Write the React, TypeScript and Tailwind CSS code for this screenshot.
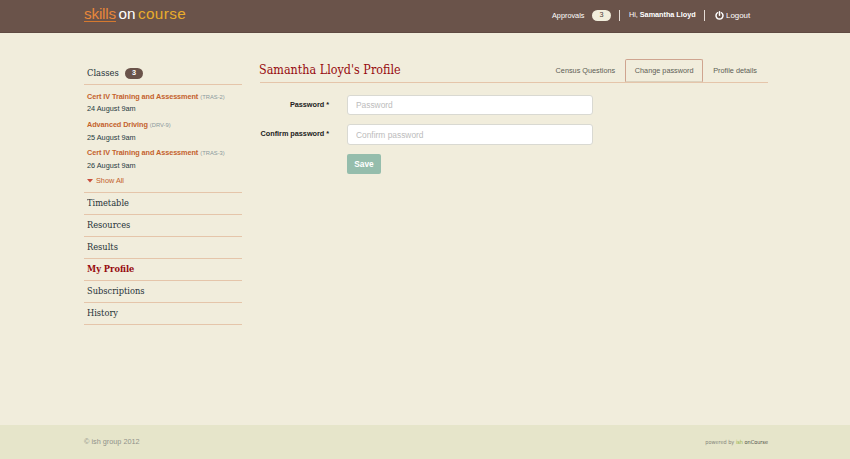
import React from "react";

const sans = "font-['Liberation_Sans',Arial,sans-serif]";
const slab = "font-['DejaVu_Serif_Condensed','DejaVu_Serif',serif] [font-stretch:condensed]";

const classes = [
  { name: "Cert IV Training and Assessment", code: "(TRAS-2)", date: "24 August 9am" },
  { name: "Advanced Driving", code: "(DRV-9)", date: "25 August 9am" },
  { name: "Cert IV Training and Assessment", code: "(TRAS-3)", date: "26 August 9am" },
];

const links = ["Timetable", "Resources", "Results", "My Profile", "Subscriptions", "History"];

function Header() {
  return (
    <header className="flex h-[33px] shrink-0 justify-between border-b border-[#5f4a42] bg-[#6a534a] pl-[84px] pr-[99px]">
      <div className="flex gap-[2.5px] pt-[5px] text-[15.3px] leading-[17px]">
        <span className="h-[17px] w-[32px] border-b border-[#d5792f] tracking-[-0.2px] text-[#e8873a]">skills</span>
        <span className="w-[17px] text-white">on</span>
        <span className="tracking-[0.35px] text-[#e9ac2c]">course</span>
      </div>
      <div className="flex h-[31px] items-center text-[7.3px] text-white">
        <span className="w-[40px] pt-px">Approvals</span>
        <span className="flex h-[11px] w-[19px] items-center justify-center rounded-full bg-[#f1eddc] text-[#4b3932]">3</span>
        <span className="ml-[8px] h-[11px] w-px bg-[#e5dcd6]" />
        <span className="ml-[9px] w-[67px] whitespace-nowrap tracking-[-0.04px]">Hi, <b>Samantha Lloyd</b></span>
        <span className="ml-[8px] h-[11px] w-px bg-[#e5dcd6]" />
        <svg className="ml-[10px] size-[9px]" viewBox="0 0 18 18" fill="none" stroke="white" strokeWidth="3" strokeLinecap="round">
          <path d="M5 3.5a7 7 0 1 0 8 0M9 1.5v7" />
        </svg>
        <span className="ml-[2px] w-[25px] text-[7.9px]">Logout</span>
      </div>
    </header>
  );
}

function Sidebar() {
  return (
    <aside className="w-[158px] shrink-0">
      <div className="flex h-[26px] items-center border-b border-[#e5c5aa] pl-[3px] pt-[4px]">
        <span className={`${slab} w-[38px] origin-left scale-x-[.94] whitespace-nowrap text-[9.9px] text-[#263238]`}>Classes</span>
        <span className="flex h-[11px] w-[18px] items-center justify-center rounded-full bg-[#6a534a] text-[7.3px] font-bold text-white">3</span>
      </div>
      <div className="h-[108px] border-b border-[#e5c5aa] pl-[3px] pt-[5.5px]">
        {classes.map((c, i) => (
          <div key={i} className="h-[28.3px] whitespace-nowrap text-[7.3px] leading-[11.7px]">
            <div className="text-[#c4622c]">
              <b className="tracking-[-0.08px]">{c.name}</b> <span className="text-[5.8px] text-[#8b9a9d]">{c.code}</span>
            </div>
            <div className="text-[#263b42]">{c.date}</div>
          </div>
        ))}
        <div className="flex items-center gap-[3px] text-[7.3px] leading-[11px] text-[#c4622c]">
          <svg className="h-[4px] w-[6px]" viewBox="0 0 6 4"><path d="M0 0h6L3 3.5z" fill="#c94e3d" /></svg>
          Show All
        </div>
      </div>
      <nav>
        {links.map((l) => (
          <a key={l} className="flex h-[22px] items-center border-b border-[#e5c5aa] pl-[3px]">
            <span className={`${slab} origin-left scale-x-[.93] whitespace-nowrap text-[9.9px] ${l === "My Profile" ? "font-bold text-[#970b0f]" : "text-[#263238]"}`}>{l}</span>
          </a>
        ))}
      </nav>
    </aside>
  );
}

function Field({ label }: { label: string }) {
  return (
    <div className="mb-[9px] flex h-[20.5px]">
      <label className="flex w-[69px] shrink-0 justify-end whitespace-nowrap pt-[4px] text-[7.3px] font-bold leading-[11px] tracking-[-0.03px] text-[#222]">{label} *</label>
      <input
        className="ml-[18px] h-[20.5px] w-[246px] rounded-[3px] border border-[#d9d9d2] bg-white px-[8px] pt-px text-[8.4px] outline-none placeholder:text-[#bcbcbc]"
        placeholder={label}
      />
    </div>
  );
}

function Profile() {
  return (
    <main className="ml-[18px] w-[508px]">
      <div className="flex h-[24px] justify-between border-b border-[#e5c5aa]">
        <h1 className={`${slab} -ml-px origin-left scale-x-[.95] whitespace-nowrap text-[13.1px] leading-[21px] text-[#970b0f]`}>Samantha Lloyd's Profile</h1>
        <div className="flex shrink-0 items-start text-[7.3px] text-[#5d5d55]">
          <span className="mr-[10px] pt-px leading-[22px]">Census Questions</span>
          <span className="h-[23px] w-[78px] rounded-t-[2px] border border-[#cfa48f] border-b-[#dcd2be] text-center leading-[22px]">Change password</span>
          <span className="ml-[10px] mr-[11px] pt-px leading-[22px]">Profile details</span>
        </div>
      </div>
      <form className="pt-[11.5px]">
        <Field label="Password" />
        <Field label="Confirm password" />
        <button type="button" className="ml-[87px] flex h-[20px] w-[34px] items-center justify-center rounded-[2px] bg-[#95bdac] pt-px text-[8.3px] font-bold text-white">Save</button>
      </form>
    </main>
  );
}

export default function App() {
  return (
    <div className={`${sans} flex h-[459px] w-[850px] flex-col overflow-hidden bg-[#f1eddc]`}>
      <Header />
      <div className="flex flex-1 pl-[84px] pt-[26px]">
        <Sidebar />
        <Profile />
      </div>
      <footer className="flex h-[34px] shrink-0 items-center justify-between bg-[#e6e5ca] pl-[84px] pr-[82px] pt-px text-[7.3px] text-[#91938b]">
        <span>© ish group 2012</span>
        <span className="whitespace-nowrap font-['DejaVu_Sans_Condensed','DejaVu_Sans',sans-serif] text-[5.5px] text-[#85867a]">
          powered by <span className="text-[#8fae3e]">ish</span> <span className="text-[#4e5048]">onCourse</span>
        </span>
      </footer>
    </div>
  );
}
